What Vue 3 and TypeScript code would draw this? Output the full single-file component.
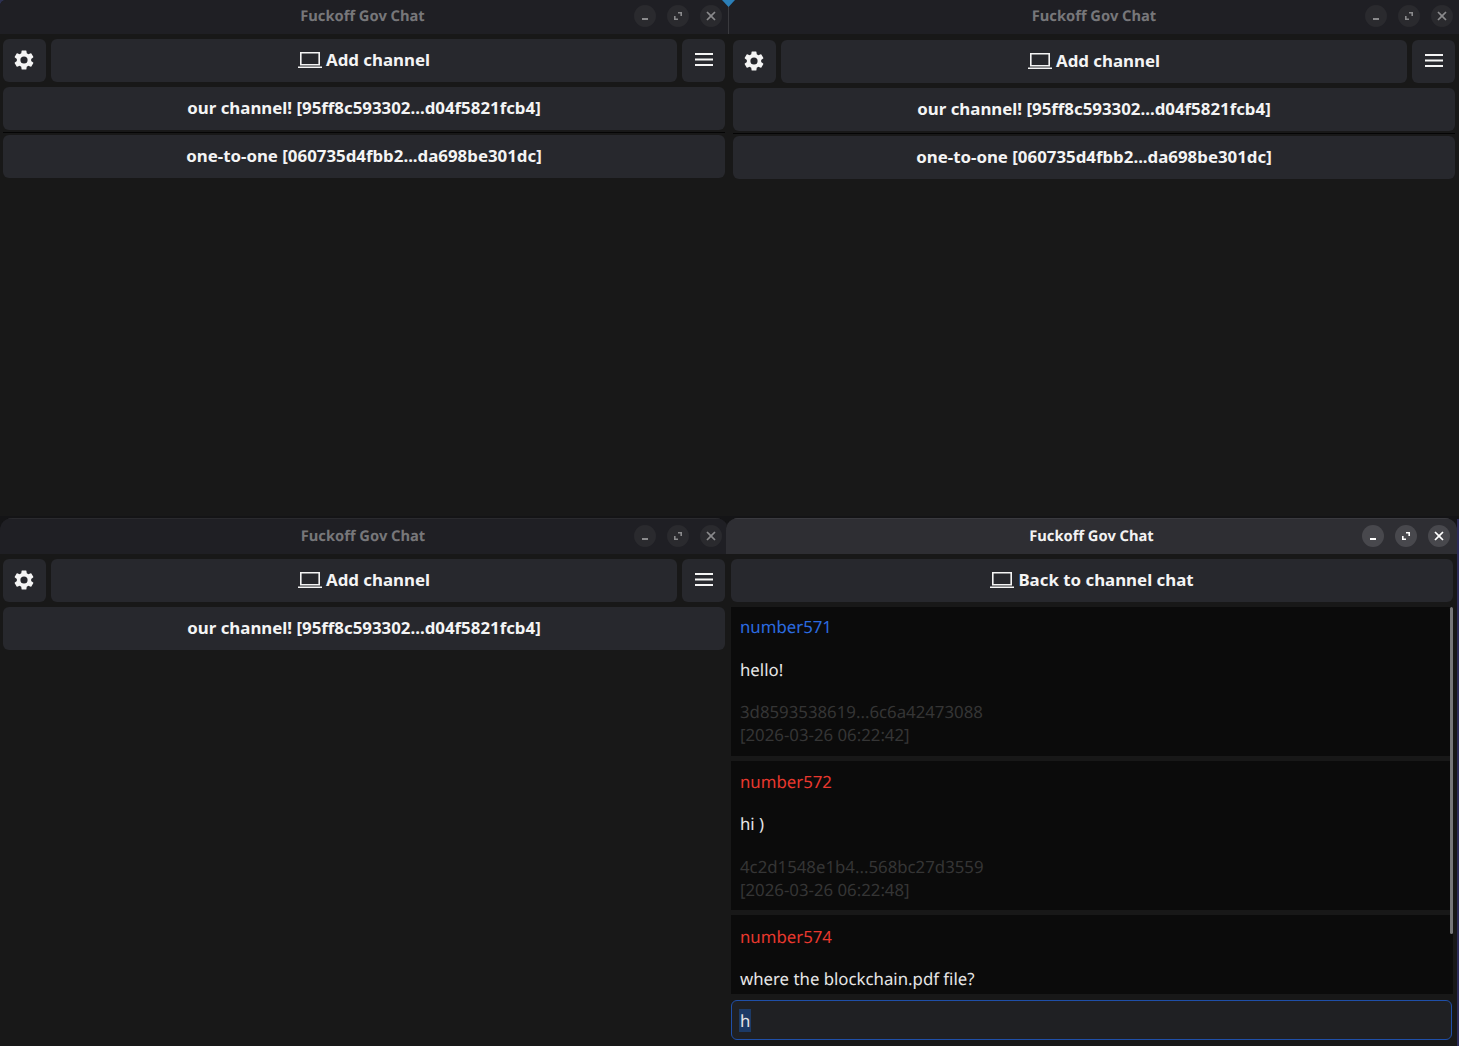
<script setup lang="ts">
interface Win {
  cls: string
  channels: string[]
}
const listWindows: Win[] = [
  { cls: 'w1', channels: ['our channel! [95ff8c593302...d04f5821fcb4]', 'one-to-one [060735d4fbb2...da698be301dc]'] },
  { cls: 'w2', channels: ['our channel! [95ff8c593302...d04f5821fcb4]', 'one-to-one [060735d4fbb2...da698be301dc]'] },
  { cls: 'w3', channels: ['our channel! [95ff8c593302...d04f5821fcb4]'] },
]
const messages = [
  { name: 'number571', color: 'blue', text: 'hello!', id: '3d8593538619...6c6a42473088', time: '[2026-03-26 06:22:42]' },
  { name: 'number572', color: 'red', text: 'hi )', id: '4c2d1548e1b4...568bc27d3559', time: '[2026-03-26 06:22:48]' },
  { name: 'number574', color: 'red', text: 'where the blockchain.pdf file?', id: '', time: '' },
]
const gear = 'M19.14 12.94c.04-.3.06-.61.06-.94s-.02-.64-.07-.94l2.03-1.58a.49.49 0 0 0 .12-.61l-1.92-3.32a.49.49 0 0 0-.59-.22l-2.39.96a7 7 0 0 0-1.62-.94l-.36-2.54a.48.48 0 0 0-.48-.41h-3.84a.48.48 0 0 0-.47.41l-.36 2.54a7.2 7.2 0 0 0-1.62.94l-2.39-.96a.48.48 0 0 0-.59.22L2.74 8.87a.48.48 0 0 0 .12.61l2.03 1.58c-.05.3-.09.63-.09.94s.02.64.07.94l-2.03 1.58a.49.49 0 0 0-.12.61l1.92 3.32c.12.22.37.29.59.22l2.39-.96c.5.38 1.03.7 1.62.94l.36 2.54c.05.24.24.41.48.41h3.84c.24 0 .44-.17.47-.41l.36-2.54a7 7 0 0 0 1.62-.94l2.39.96c.22.08.47 0 .59-.22l1.92-3.32a.48.48 0 0 0-.12-.61zM12 15.6a3.6 3.6 0 1 1 0-7.2 3.6 3.6 0 0 1 0 7.2z'
</script>

<template>
  <div class="desktop">
    <div class="corner"></div>
    <div class="corner-left"></div>
    <div class="wall"></div>
    <section v-for="w in listWindows" :key="w.cls" class="window" :class="w.cls">
      <header class="titlebar">
        <span class="title">Fuckoff Gov Chat</span>
        <div class="controls">
          <span class="ctl"><svg viewBox="0 0 22 22"><rect x="8" y="13" width="6" height="2" /></svg></span>
          <span class="ctl"><svg viewBox="0 0 22 22"><path d="M11 7h4v4h-1.6V8.6H11zM7 11h1.6v2.4H11V15H7z" /></svg></span>
          <span class="ctl"><svg viewBox="0 0 22 22"><path d="M7.6 6.4 11 9.8l3.4-3.4 1.2 1.2-3.4 3.4 3.4 3.4-1.2 1.2-3.4-3.4-3.4 3.4-1.2-1.2 3.4-3.4-3.4-3.4z" /></svg></span>
        </div>
      </header>
      <div class="body">
        <div class="toolbar">
          <button class="btn square">
            <svg class="gear" viewBox="0 0 24 24"><path :d="gear" /></svg>
          </button>
          <button class="btn grow">
            <svg class="laptop" viewBox="0 0 24 16"><path d="M2 0h20v13.5H2zM3.6 1.6v10.3h16.8V1.6zM0 14.5h24V16H0z" fill-rule="evenodd" /></svg>
            Add channel
          </button>
          <button class="btn square">
            <svg class="burger" viewBox="0 0 18 13"><path d="M0 0h18v2H0zM0 5.5h18v2H0zM0 11h18v2H0z" /></svg>
          </button>
        </div>
        <button v-for="c in w.channels" :key="c" class="btn channel">{{ c }}</button>
      </div>
    </section>

    <section class="window w4">
      <header class="titlebar">
        <span class="title">Fuckoff Gov Chat</span>
        <div class="controls">
          <span class="ctl"><svg viewBox="0 0 22 22"><rect x="8" y="13" width="6" height="2" /></svg></span>
          <span class="ctl"><svg viewBox="0 0 22 22"><path d="M11 7h4v4h-1.6V8.6H11zM7 11h1.6v2.4H11V15H7z" /></svg></span>
          <span class="ctl"><svg viewBox="0 0 22 22"><path d="M7.6 6.4 11 9.8l3.4-3.4 1.2 1.2-3.4 3.4 3.4 3.4-1.2 1.2-3.4-3.4-3.4 3.4-1.2-1.2 3.4-3.4-3.4-3.4z" /></svg></span>
        </div>
      </header>
      <div class="body chat">
        <button class="btn back">
          <svg class="laptop" viewBox="0 0 24 16"><path d="M2 0h20v13.5H2zM3.6 1.6v10.3h16.8V1.6zM0 14.5h24V16H0z" fill-rule="evenodd" /></svg>
          Back to channel chat
        </button>
        <div class="messages">
          <article v-for="m in messages" :key="m.name" class="msg">
            <div class="name" :class="m.color">{{ m.name }}</div>
            <div class="text">{{ m.text }}</div>
            <div v-if="m.id" class="meta">{{ m.id }}<br />{{ m.time }}</div>
          </article>
          <div class="scrollbar"></div>
        </div>
        <div class="input"><span class="sel">h</span></div>
      </div>
    </section>
  </div>
</template>

<style>
html, body { margin: 0; background: #141414; }
</style>

<style scoped>
.desktop {
  position: relative;
  width: 1459px;
  height: 1046px;
  overflow: hidden;
  background: #141416;
  font-family: "Noto Sans", "Open Sans", sans-serif;
  text-rendering: geometricPrecision;
}
.corner {
  position: absolute;
  z-index: 5;
  left: 722px;
  top: 0;
  width: 13px;
  height: 7px;
  background: #2b7fb8;
  clip-path: polygon(0 0, 100% 0, 50% 100%);
}
.corner-left {
  position: absolute;
  left: 0;
  top: 0;
  width: 8px;
  height: 8px;
  background: #2c3050;
}
.wall {
  position: absolute;
  left: 1457px;
  top: 519px;
  width: 2px;
  height: 527px;
  background: #2c2c58;
}
.window {
  position: absolute;
  display: flex;
  flex-direction: column;
  background: #181818;
  overflow: hidden;
}
.w1 { left: 0; top: 0; width: 729px; height: 516px; border-top-left-radius: 6px; }
.w2 { left: 729px; top: 0; width: 730px; height: 516px; }
.w3 { left: 0; top: 518px; width: 728px; height: 528px; border-radius: 12px 12px 0 0; }
.w4 { left: 726px; top: 518px; width: 731px; height: 528px; border-radius: 12px 12px 0 0; z-index: 2; }
.titlebar {
  position: relative;
  flex: none;
  height: 34px;
  display: flex;
  align-items: center;
  justify-content: center;
  background: #1f1f24;
  box-sizing: border-box;
  padding-bottom: 2px;
}
.w1 .titlebar {
  padding-right: 3px;
  border-right: 1px solid #3a3a3e;
}
.w3 .titlebar { height: 36px; border-top: 1px solid #2a2a2e; padding-right: 2px; }
.w4 .titlebar { height: 36px; background: #2e2e33; border-top: 1px solid #3a3a3f; }
.title {
  font-size: 14.7px;
  font-weight: 700;
  color: #77777a;
}
.w4 .title { color: #f2f2f2; }
.controls {
  position: absolute;
  right: 6px;
  top: 5px;
  display: flex;
  gap: 11px;
}
.w3 .controls { right: 6px; top: 6px; }
.w4 .controls { right: 7px; top: 6px; }
.ctl {
  width: 22px;
  height: 22px;
  border-radius: 50%;
  background: #2a2a2e;
  display: block;
}
.w4 .ctl { background: #48484d; }
.ctl svg { width: 22px; height: 22px; display: block; fill: #8a8a8c; }
.w4 .ctl svg { fill: #ffffff; }
.body {
  flex: 1;
  display: flex;
  flex-direction: column;
  gap: 5px;
  padding: 5px 3px 0;
  min-height: 0;
}
.w1 .body { padding-right: 4px; }
.w2 .body { padding: 6px 4px 0; }
.toolbar {
  display: flex;
  gap: 5px;
}
.btn {
  position: relative;
  overflow: visible;
  flex: none;
  height: 43px;
  border: 0;
  border-radius: 6px;
  background: #27282d;
  color: #f4f4f4;
  font-family: inherit;
  font-size: 16.85px;
  font-weight: 700;
  display: flex;
  align-items: center;
  justify-content: center;
  padding: 0 0 2px;
}
.square { width: 43px; flex: none; }
.grow { flex: 1; }
.channel { width: 100%; }
.w1 .channel:nth-child(2)::after,
.w2 .channel:nth-child(2)::after {
  content: "";
  position: absolute;
  left: 0;
  right: 0;
  top: 45px;
  height: 1px;
  background: #050505;
}
.gear { width: 24px; height: 24px; fill: #f4f4f4; margin-right: 1px; }
.burger { width: 18px; height: 13px; fill: #f4f4f4; }
.laptop { width: 24px; height: 16px; fill: #f4f4f4; margin-right: 4px; }
.chat { padding: 5px 4px 6px 5px; }
.back { width: 100%; }
.messages {
  position: relative;
  flex: 1;
  min-height: 0;
  display: flex;
  flex-direction: column;
  gap: 5.3px;
  overflow: hidden;
}
.msg {
  flex: none;
  background: #0b0b0b;
  padding: 8px 9px 0;
  height: 148.7px;
  box-sizing: border-box;
  font-size: 16.8px;
  line-height: 23px;
}
.msg:nth-child(2) { padding-top: 9px; }
.msg:nth-child(3) { padding-top: 10px; }
.name { height: 23px; margin-bottom: 19.6px; }
.msg + .msg .name { margin-bottom: 19px; }
.name.blue { color: #2b6be0; }
.name.red { color: #e8382e; }
.text { color: #e6e6e6; height: 23px; margin-bottom: 19.2px; }
.msg + .msg .text { margin-bottom: 19.6px; }
.meta { color: #353535; }
.scrollbar {
  position: absolute;
  right: 0;
  top: 0;
  width: 3px;
  height: 327px;
  border-radius: 2px;
  background: #77777a;
}
.input {
  flex: none;
  height: 40px;
  margin: 1px 1px 0 0;
  border: 1.5px solid #1f4fa8;
  border-radius: 6px;
  background: #1f2023;
  box-sizing: border-box;
  display: flex;
  align-items: center;
  padding-left: 7px;
  color: #e6e6e6;
  font-size: 16.8px;
  line-height: 23px;
}
.sel { background: #1c3a66; padding: 0 1px; }
</style>
